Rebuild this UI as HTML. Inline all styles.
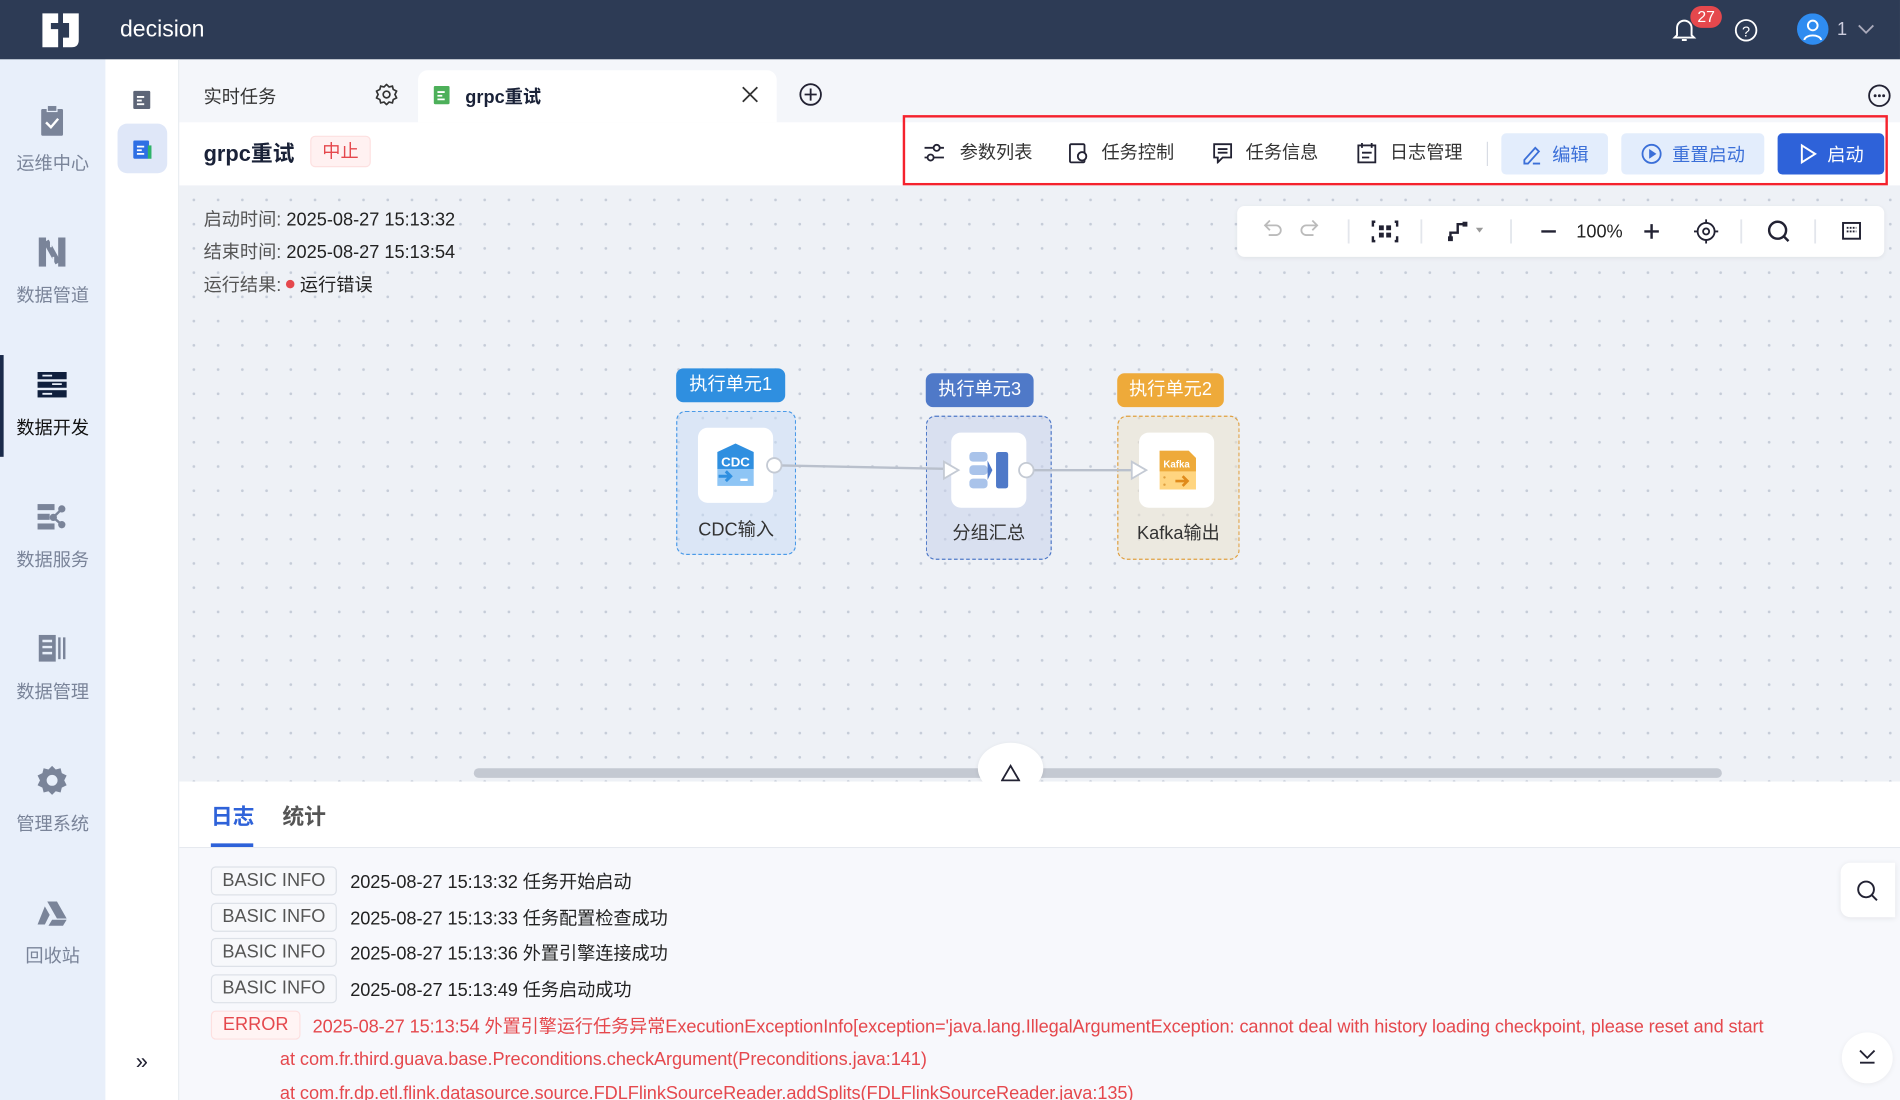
<!DOCTYPE html>
<html><head><meta charset="utf-8"><style>
*{box-sizing:border-box;margin:0;padding:0}
html,body{width:1900px;height:1100px;overflow:hidden;background:#fff}
#w{position:absolute;left:0;top:0;width:1568px;height:908px;transform:scale(1.21173);transform-origin:0 0;font-family:"Liberation Sans","Noto Sans CJK SC",sans-serif;color:#222;overflow:hidden}
.a{position:absolute}
.hdr{left:0;top:0;width:1568px;height:49px;background:#2d3b55}
.nav{left:0;top:49px;width:87px;height:859px;background:#e8effa}
.ni{position:absolute;left:0;width:87px;text-align:center;font-size:15px;color:#7a8499}
.col2{left:87px;top:49px;width:61px;height:859px;background:#fff;border-right:1px solid #e8ebf0}
.tabs{left:148px;top:49px;width:1420px;height:52px;background:#f4f6fa}
.tb{left:148px;top:101px;width:1420px;height:52px;background:#fff}
.canvas{left:148px;top:153px;width:1420px;height:492px;background-color:#eef1f6;background-image:radial-gradient(circle,#c5ccd8 1px,transparent 1.3px);background-size:20px 20px;background-position:2px 2px}
.tool{display:flex;align-items:center;gap:6px;font-size:15px;color:#333;position:absolute;top:115px}
.btn{position:absolute;top:110px;height:34px;border-radius:4px;display:flex;align-items:center;justify-content:center;gap:8px;font-size:15px}
.lbl{position:absolute;height:28px;border-radius:6px;color:#fff;font-size:15px;line-height:28px;text-align:center}
.grp{position:absolute;border:1.5px dashed;border-radius:8px}
.card{position:absolute;width:62px;height:62px;background:#fff;border-radius:8px}
.nt{position:absolute;font-size:15px;color:#333;text-align:center}
.tag{position:absolute;left:174px;width:104px;height:24px;border:1px solid #dde1e8;border-radius:4px;background:#f7f8fb;color:#555;font-size:15px;line-height:22px;text-align:center}
.lt{position:absolute;left:289px;font-size:15px;color:#222;white-space:nowrap;letter-spacing:-0.05px}
</style></head><body><div id="w">
<div class="a hdr"></div>
<svg class="a" style="left:33px;top:8px" width="34" height="34" viewBox="0 0 34 34"><path d="M2 3h13v8h-6v5h6v15H2z M19 3h13v22c0 4-2 6-6 6h-7v-8h5V11h-5z" fill="#fff"/></svg>
<div class="a" style="left:99px;top:14px;font-size:19px;color:#fff">decision</div>
<svg class="a" style="left:1380px;top:14px" width="20" height="22" viewBox="0 0 20 22"><path d="M4 15V9a6 6 0 0112 0v6l2 2H2z M8 19h4" fill="none" stroke="#fff" stroke-width="1.6"/></svg>
<div class="a" style="left:1395px;top:5px;width:26px;height:18px;border-radius:9px;background:#e5484d;color:#fff;font-size:13px;text-align:center;line-height:18px">27</div>
<svg class="a" style="left:1431px;top:15px" width="20" height="20"><circle cx="10" cy="10" r="8.5" fill="none" stroke="#fff" stroke-width="1.5"/><text x="10" y="15" font-size="12" fill="#fff" text-anchor="middle" font-family="Liberation Sans">?</text></svg>
<svg class="a" style="left:1483px;top:11px" width="26" height="26"><circle cx="13" cy="13" r="13" fill="#2f8cf0"/><circle cx="13" cy="10" r="4" fill="none" stroke="#fff" stroke-width="1.6"/><path d="M6 22c1-5 13-5 14 0" fill="none" stroke="#fff" stroke-width="1.6"/></svg>
<div class="a" style="left:1516px;top:16px;color:#ccd;font-size:15px">1</div>
<svg class="a" style="left:1533px;top:19px" width="14" height="10"><path d="M1 2l6 6 6-6" fill="none" stroke="#aab" stroke-width="1.5"/></svg>

<div class="a nav"></div>
<div class="a" style="left:0;top:293px;width:3px;height:84px;background:#1a2a4a"></div>
<svg class="a" style="left:33px;top:87px" width="20" height="26"><rect x="1" y="3" width="18" height="22" rx="1" fill="#7a8499"/><rect x="6" y="0" width="8" height="5" fill="#7a8499" stroke="#e8effa"/><path d="M5 14l4 4 6-7" stroke="#fff" stroke-width="2" fill="none"/></svg>
<div class="ni" style="top:124px">运维中心</div>
<svg class="a" style="left:31px;top:195px" width="24" height="26"><rect x="1" y="1" width="6" height="24" fill="#7a8499"/><rect x="17" y="1" width="6" height="24" fill="#7a8499"/><path d="M7 4l10 18" stroke="#7a8499" stroke-width="5"/><path d="M11 1v8M13 17v8" stroke="#e8effa" stroke-width="1.5"/></svg>
<div class="ni" style="top:233px">数据管道</div>
<svg class="a" style="left:30px;top:306px" width="26" height="22"><rect x="1" y="1" width="24" height="6" fill="#0f1f3d"/><rect x="1" y="9" width="24" height="5" fill="#0f1f3d"/><rect x="1" y="16" width="24" height="6" fill="#0f1f3d"/><path d="M5 4h8M13 11h8M5 19h8" stroke="#e8effa" stroke-width="1.5"/></svg>
<div class="ni" style="top:342px;color:#111">数据开发</div>
<svg class="a" style="left:30px;top:415px" width="26" height="22"><rect x="1" y="1" width="14" height="5" fill="#7a8499"/><rect x="1" y="9" width="10" height="5" fill="#7a8499"/><rect x="1" y="17" width="14" height="5" fill="#7a8499"/><circle cx="21" cy="5" r="3" fill="#7a8499"/><circle cx="21" cy="18" r="3" fill="#7a8499"/><circle cx="14" cy="12" r="3" fill="#7a8499"/><path d="M14 12L21 5M14 12l7 6" stroke="#7a8499" stroke-width="2"/></svg>
<div class="ni" style="top:451px">数据服务</div>
<svg class="a" style="left:31px;top:523px" width="24" height="24"><rect x="1" y="1" width="14" height="22" fill="#7a8499"/><path d="M4 6h8M4 11h8M4 16h8" stroke="#e8effa" stroke-width="2"/><rect x="17" y="3" width="2" height="18" fill="#7a8499"/><rect x="21" y="3" width="2" height="18" fill="#7a8499"/></svg>
<div class="ni" style="top:560px">数据管理</div>
<svg class="a" style="left:30px;top:631px" width="26" height="26" viewBox="0 0 26 26"><path d="M13 1l3 3 4-1 1 4 4 2-2 4 2 4-4 2-1 4-4-1-3 3-3-3-4 1-1-4-4-2 2-4-2-4 4-2 1-4 4 1z" fill="#7a8499"/><circle cx="13" cy="13" r="4.5" fill="#e8effa"/></svg>
<div class="ni" style="top:669px">管理系统</div>
<svg class="a" style="left:30px;top:743px" width="26" height="22"><path d="M9 1h8l8 14h-8z" fill="#7a8499"/><path d="M7 5l4 7-4 8H1z" fill="#7a8499"/><path d="M10 21l3-5h12l-3 5z" fill="#7a8499"/></svg>
<div class="ni" style="top:778px">回收站</div>

<div class="a col2"></div>
<svg class="a" style="left:109px;top:73px" width="16" height="18"><rect x="1" y="2" width="14" height="15" rx="1" fill="#5d6577"/><path d="M4 7h6M4 10h4M4 13h6" stroke="#fff" stroke-width="1.5"/></svg>
<div class="a" style="left:97px;top:102px;width:41px;height:41px;border-radius:8px;background:#dfe7f8"></div>
<svg class="a" style="left:109px;top:114px" width="17" height="18"><rect x="1" y="2" width="13" height="15" rx="1" fill="#2f6fe4"/><rect x="13" y="6" width="3" height="11" fill="#2fb36a"/><path d="M4 7h6M4 10h4M4 13h6" stroke="#fff" stroke-width="1.5"/></svg>
<div class="a" style="left:112px;top:866px;font-size:18px;color:#223">»</div>

<div class="a tabs"></div>
<div class="a" style="left:168px;top:69px;font-size:15px;color:#333">实时任务</div>
<svg class="a" style="left:310px;top:69px" width="18" height="18" viewBox="0 0 26 26"><path d="M13 1l3 3 4-1 1 4 4 2-2 4 2 4-4 2-1 4-4-1-3 3-3-3-4 1-1-4-4-2 2-4-2-4 4-2 1-4 4 1z" fill="none" stroke="#333" stroke-width="2"/><circle cx="13" cy="13" r="4" fill="none" stroke="#333" stroke-width="2"/></svg>
<div class="a" style="left:345px;top:58px;width:296px;height:43px;background:#fff;border-radius:8px 8px 0 0"></div>
<svg class="a" style="left:357px;top:69px" width="16" height="18"><rect x="1" y="2" width="13" height="15" rx="1" fill="#4db05a"/><path d="M4 7h6M4 10h4M4 13h6" stroke="#fff" stroke-width="1.5"/></svg>
<div class="a" style="left:384px;top:69px;font-size:15px;font-weight:bold;color:#1a2238">grpc重试</div>
<svg class="a" style="left:612px;top:71px" width="14" height="14"><path d="M1 1l12 12M13 1L1 13" stroke="#333" stroke-width="1.5"/></svg>
<svg class="a" style="left:659px;top:68px" width="20" height="20"><circle cx="10" cy="10" r="8.5" fill="none" stroke="#223" stroke-width="1.5"/><path d="M10 5v10M5 10h10" stroke="#223" stroke-width="1.5"/></svg>
<svg class="a" style="left:1541px;top:69px" width="20" height="20"><circle cx="10" cy="10" r="8.5" fill="none" stroke="#223" stroke-width="1.5"/><circle cx="6.5" cy="10" r="1.2" fill="#223"/><circle cx="10" cy="10" r="1.2" fill="#223"/><circle cx="13.5" cy="10" r="1.2" fill="#223"/></svg>

<div class="a tb"></div>
<div class="a" style="left:168px;top:113px;font-size:18px;font-weight:bold;color:#1a2238">grpc重试</div>
<div class="a" style="left:256px;top:112px;width:50px;height:26px;background:#fff1f1;border:1px solid #fde0e0;border-radius:4px;color:#e5484d;font-size:15px;text-align:center;line-height:26px">中止</div>
<div class="a" style="left:745px;top:95px;width:813px;height:58px;border:2px solid #f5222d"></div>
<div class="tool" style="left:762px"><svg width="18" height="16"><path d="M1 4h16M1 12h16" stroke="#223" stroke-width="1.5"/><circle cx="11" cy="4" r="2.5" fill="#fff" stroke="#223" stroke-width="1.5"/><circle cx="6" cy="12" r="2.5" fill="#fff" stroke="#223" stroke-width="1.5"/></svg><span style="margin-left:6px">参数列表</span></div>
<div class="tool" style="left:881px"><svg width="18" height="18"><rect x="2" y="2" width="12" height="15" rx="1" fill="none" stroke="#223" stroke-width="1.5"/><circle cx="12" cy="12" r="3.5" fill="#fff" stroke="#223" stroke-width="1.5"/></svg><span style="margin-left:4px">任务控制</span></div>
<div class="tool" style="left:1000px"><svg width="18" height="18"><path d="M2 2h14v11H9l-4 4v-4H2z" fill="none" stroke="#223" stroke-width="1.5"/><path d="M5 6h8M5 9h8" stroke="#223" stroke-width="1.5"/></svg><span style="margin-left:4px">任务信息</span></div>
<div class="tool" style="left:1119px"><svg width="18" height="18"><rect x="2" y="3" width="14" height="14" fill="none" stroke="#223" stroke-width="1.5"/><path d="M5 1v4M13 1v4M5 9h8M5 13h6" stroke="#223" stroke-width="1.5"/></svg><span style="margin-left:4px">日志管理</span></div>
<div class="a" style="left:1227px;top:117px;width:1px;height:20px;background:#d8dce4"></div>
<div class="btn" style="left:1239px;width:88px;background:#e3edfc;color:#3b6fd8"><svg width="18" height="18"><path d="M3 14l9-10 3 3-9 10H3z M10 17h6" fill="none" stroke="#3b6fd8" stroke-width="1.5"/></svg>编辑</div>
<div class="btn" style="left:1338px;width:118px;background:#e3edfc;color:#3b6fd8"><svg width="18" height="18"><circle cx="9" cy="9" r="7.5" fill="none" stroke="#3b6fd8" stroke-width="1.5"/><path d="M7 5l6 4-6 4z" fill="#3b6fd8"/></svg>重置启动</div>
<div class="btn" style="left:1467px;width:88px;background:#2e62d9;color:#fff"><svg width="16" height="18"><path d="M3 2l11 7-11 7z" fill="none" stroke="#fff" stroke-width="1.6"/></svg>启动</div>

<div class="a canvas"></div>
<div class="a" style="left:168px;top:168px;font-size:15px;line-height:27px;color:#555">启动时间: <span style="color:#222">2025-08-27 15:13:32</span><br>结束时间: <span style="color:#222">2025-08-27 15:13:54</span><br>运行结果: <span style="display:inline-block;width:7px;height:7px;border-radius:50%;background:#e5484d;vertical-align:2px"></span> <span style="color:#222">运行错误</span></div>
<div class="a" style="left:1021px;top:170px;width:534px;height:42px;background:#fff;border-radius:6px;box-shadow:0 1px 4px rgba(0,0,0,.06)"></div>
<svg class="a" style="left:1021px;top:170px" width="534" height="42">
<g fill="none" stroke-width="1.5">
<path d="M21 15l-4 4 4 4M17 19h9a4 4 0 010 8h-6" stroke="#bbb" transform="translate(6,-3)"/>
<path d="M68 15l4 4-4 4M72 19h-9a4 4 0 000 8h6" stroke="#bbb" transform="translate(-6,-3)"/>
<line x1="92" y1="11" x2="92" y2="31" stroke="#e3e6ec"/>
<path d="M114 13h-2v4M114 29h-2v-4M130 13h2v4M130 29h2v-4" stroke="#223" stroke-width="2"/>
<rect x="117" y="16" width="4" height="4" fill="#223" stroke="none"/><rect x="123" y="16" width="4" height="4" fill="#223" stroke="none"/><rect x="117" y="22" width="4" height="4" fill="#223" stroke="none"/><rect x="123" y="22" width="4" height="4" fill="#223" stroke="none"/>
<line x1="152" y1="11" x2="152" y2="31" stroke="#e3e6ec"/>
<path d="M176 27v-5h6v-7h6" stroke="#223" stroke-width="2"/><rect x="174" y="25" width="4" height="4" fill="#223" stroke="none"/><rect x="186" y="13" width="4" height="4" fill="#223" stroke="none"/><path d="M197 18l3 4 3-4z" fill="#999" stroke="none"/>
<line x1="226" y1="11" x2="226" y2="31" stroke="#e3e6ec"/>
<path d="M251 21h12" stroke="#223" stroke-width="2"/>
<path d="M336 21h12M342 15v12" stroke="#223" stroke-width="2"/>
<circle cx="387" cy="21" r="7" stroke="#223"/><circle cx="387" cy="21" r="2.5" stroke="#223"/><path d="M387 11v3M387 28v3M377 21h3M394 21h3" stroke="#223"/>
<line x1="416" y1="11" x2="416" y2="31" stroke="#e3e6ec"/>
<circle cx="446" cy="20" r="7" stroke="#223" stroke-width="2"/><path d="M451 25l4 4" stroke="#223" stroke-width="2"/>
<line x1="477" y1="11" x2="477" y2="31" stroke="#e3e6ec"/>
<rect x="500" y="14" width="14" height="13" stroke="#223" stroke-width="1.6"/><path d="M503 18h8M503 21h8" stroke="#223" stroke-dasharray="1.5 1"/>
</g>
<text x="299" y="26" font-size="15" text-anchor="middle" fill="#222" font-family="Liberation Sans">100%</text>
</svg>

<!-- nodes -->
<div class="lbl" style="left:558px;top:304px;width:90px;background:#2f8fe0">执行单元1</div>
<div class="grp" style="left:558px;top:339px;width:99px;height:119px;border-color:#4a9ae8;background:rgba(200,220,245,.5)"></div>
<div class="card" style="left:576px;top:353px"></div>
<svg class="a" style="left:589px;top:365px" width="38" height="40"><path d="M3 8l15-7 15 7v14H3z" fill="#2f8fe0"/><text x="18" y="20" font-size="11" font-weight="bold" fill="#fff" text-anchor="middle" font-family="Liberation Sans">CDC</text><rect x="3" y="22" width="30" height="14" fill="#8ec5f5"/><path d="M4 28h9M10 24l4 4-4 4" stroke="#2f8fe0" stroke-width="2.5" fill="none"/><path d="M22 31h6" stroke="#fff" stroke-width="2"/></svg>
<div class="nt" style="left:558px;top:426px;width:99px">CDC输入</div>

<div class="lbl" style="left:764px;top:308px;width:89px;background:#4f79c8">执行单元3</div>
<div class="grp" style="left:764px;top:343px;width:104px;height:119px;border-color:#4f79c8;background:rgba(200,210,235,.55)"></div>
<div class="card" style="left:785px;top:357px"></div>
<svg class="a" style="left:799px;top:372px" width="34" height="32"><rect x="1" y="1" width="15" height="8" rx="3" fill="#a9c3ea"/><rect x="1" y="12" width="15" height="8" rx="3" fill="#a9c3ea"/><rect x="1" y="23" width="15" height="8" rx="3" fill="#a9c3ea"/><path d="M16 8l4 8-4 8z" fill="#4f79c8"/><rect x="23" y="1" width="10" height="30" rx="2" fill="#4f79c8"/></svg>
<div class="nt" style="left:764px;top:429px;width:104px">分组汇总</div>

<div class="lbl" style="left:922px;top:308px;width:88px;background:#eeaa3a">执行单元2</div>
<div class="grp" style="left:922px;top:343px;width:101px;height:119px;border-color:#e0a040;background:rgba(235,225,205,.55)"></div>
<div class="card" style="left:940px;top:357px"></div>
<svg class="a" style="left:956px;top:371px" width="32" height="34"><path d="M1 1h24l6 6v26H1z" fill="#ffd580"/><path d="M1 1h24l6 6v11H1z" fill="#eeaa3a"/><text x="15" y="15" font-size="8" font-weight="bold" fill="#fff" text-anchor="middle" font-family="Liberation Sans">Kafka</text><path d="M14 26h10M20 22l4 4-4 4" stroke="#e08a1a" stroke-width="2.2" fill="none"/><circle cx="5" cy="23" r="1" fill="#e0a040"/><circle cx="5" cy="29" r="1" fill="#e0a040"/></svg>
<div class="nt" style="left:922px;top:429px;width:101px">Kafka输出</div>

<svg class="a" style="left:620px;top:370px" width="340" height="35">
<path d="M19 14L165 17" stroke="#b9c0cc" stroke-width="2"/>
<path d="M227 18H320" stroke="#b9c0cc" stroke-width="2"/>
<circle cx="19" cy="14" r="6" fill="#fff" stroke="#c4cad4" stroke-width="1.5"/>
<circle cx="227" cy="18" r="6" fill="#fff" stroke="#c4cad4" stroke-width="1.5"/>
<path d="M159 11l12 7-12 7z" fill="#fff" stroke="#c4cad4" stroke-width="1.5"/>
<path d="M314 11l12 7-12 7z" fill="#fff" stroke="#c4cad4" stroke-width="1.5"/>
</svg>

<div class="a" style="left:391px;top:634px;width:1030px;height:8px;border-radius:4px;background:#c4c9d2"></div>
<div class="a" style="left:807px;top:613px;width:54px;height:42px;border-radius:50%;background:#fff;box-shadow:0 1px 4px rgba(0,0,0,.08)"></div>
<svg class="a" style="left:826px;top:630px" width="16" height="16"><path d="M8 2L15 14H1z" fill="none" stroke="#223" stroke-width="1.5"/></svg>

<!-- bottom -->
<div class="a" style="left:148px;top:645px;width:1420px;height:55px;background:#fff;border-bottom:1px solid #e6e9ef"></div>
<div class="a" style="left:174px;top:660px;font-size:18px;font-weight:bold;color:#2e62d9">日志</div>
<div class="a" style="left:233px;top:660px;font-size:18px;font-weight:bold;color:#555">统计</div>
<div class="a" style="left:174px;top:696px;width:35px;height:3px;background:#2e62d9"></div>
<div class="a" style="left:148px;top:700px;width:1420px;height:208px;background:#f7f8fc"></div>
<div class="tag" style="top:715px">BASIC INFO</div><div class="lt" style="top:717px">2025-08-27 15:13:32 任务开始启动</div>
<div class="tag" style="top:745px">BASIC INFO</div><div class="lt" style="top:747px">2025-08-27 15:13:33 任务配置检查成功</div>
<div class="tag" style="top:774px">BASIC INFO</div><div class="lt" style="top:776px">2025-08-27 15:13:36 外置引擎连接成功</div>
<div class="tag" style="top:804px">BASIC INFO</div><div class="lt" style="top:806px">2025-08-27 15:13:49 任务启动成功</div>
<div class="tag" style="top:834px;width:74px;border-color:#fde0e0;background:#fff4f4;color:#e5484d">ERROR</div>
<div class="lt" style="left:258px;top:836px;color:#e5484d;letter-spacing:-0.08px">2025-08-27 15:13:54 外置引擎运行任务异常ExecutionExceptionInfo[exception='java.lang.IllegalArgumentException: cannot deal with history loading checkpoint, please reset and start</div>
<div class="lt" style="left:231px;top:866px;color:#e5484d">at com.fr.third.guava.base.Preconditions.checkArgument(Preconditions.java:141)</div>
<div class="lt" style="left:231px;top:894px;color:#e5484d">at com.fr.dp.etl.flink.datasource.source.FDLFlinkSourceReader.addSplits(FDLFlinkSourceReader.java:135)</div>
<div class="a" style="left:1519px;top:712px;width:45px;height:45px;border-radius:8px 0 0 8px;background:#fff;box-shadow:0 1px 5px rgba(0,0,0,.08)"></div>
<svg class="a" style="left:1531px;top:725px" width="20" height="20"><circle cx="9" cy="9" r="6.5" fill="none" stroke="#223" stroke-width="1.6"/><path d="M14 14l4 4" stroke="#223" stroke-width="1.6"/></svg>
<div class="a" style="left:1520px;top:852px;width:42px;height:42px;border-radius:50%;background:#fff;box-shadow:0 1px 5px rgba(0,0,0,.06)"></div>
<svg class="a" style="left:1533px;top:864px" width="16" height="16"><path d="M2 3l6 6 6-6M2 13h12" fill="none" stroke="#223" stroke-width="1.5"/></svg>
</div></body></html>
